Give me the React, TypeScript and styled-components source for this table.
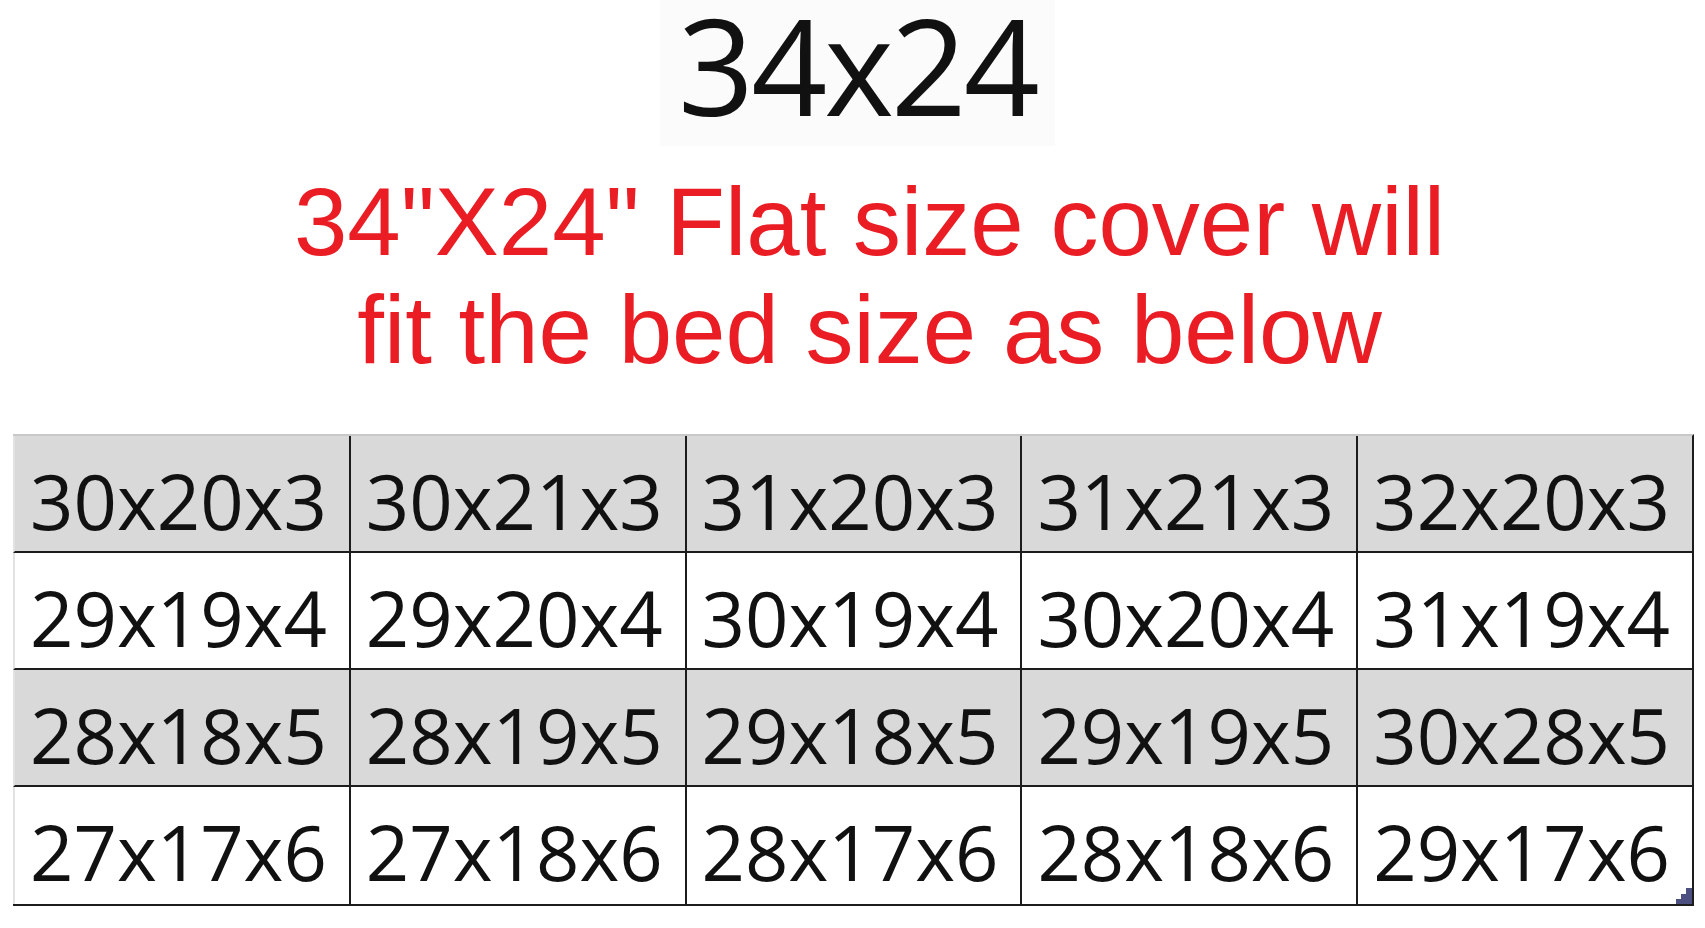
import React from 'react'
import styled, { createGlobalStyle } from 'styled-components'

const GlobalStyle = createGlobalStyle`
  html, body {
    margin: 0;
    padding: 0;
    background: #ffffff;
  }
`

const Page = styled.div`
  width: 1705px;
  height: 928px;
  overflow: hidden;
  display: flex;
  flex-direction: column;
  align-items: stretch;
  background: #ffffff;
`

const TitleWrap = styled.div`
  display: flex;
  justify-content: center;
  padding-left: 10px;
`

const Title = styled.h1`
  margin: 0;
  padding: 0 18px 16px;
  background: #fbfbfb;
  font-family: 'Open Sans', 'Noto Sans', sans-serif;
  font-weight: 400;
  font-size: 133px;
  line-height: 130px;
  letter-spacing: -3px;
  color: #111111;
`

const Notice = styled.p`
  margin: 22px 0 0;
  padding-left: 34px;
  text-align: center;
  font-family: 'Liberation Sans', Arial, sans-serif;
  font-size: 96px;
  line-height: 108px;
  color: #ea1c24;
`

const TableWrap = styled.div`
  margin: 50px 11px 0 13px;
  position: relative;
`

const Grid = styled.div`
  display: grid;
  grid-template-columns: repeat(5, 1fr);
  border-top: 2px solid #c8c8c8;
  border-right: 2px solid #1c1c1c;
  border-bottom: 2px solid #1c1c1c;
`

const Cell = styled.div<{ $shaded: boolean; $first: boolean; $lastRow: boolean }>`
  height: 117px;
  box-sizing: border-box;
  padding: 12px 0 0 15px;
  background: ${(p) => (p.$shaded ? '#d9d9d9' : '#ffffff')};
  border-left: 2px solid ${(p) => (p.$first ? '#e2e2e2' : '#1c1c1c')};
  border-bottom: ${(p) => (p.$lastRow ? 'none' : '2px solid #1c1c1c')};
  font-family: 'Open Sans', 'Noto Sans', sans-serif;
  font-size: 76px;
  line-height: 105px;
  color: #111111;
  white-space: nowrap;
`

const Handle = styled.svg`
  position: absolute;
  right: 2px;
  bottom: 2px;
  width: 16px;
  height: 16px;
`

const rows = [
  ['30x20x3', '30x21x3', '31x20x3', '31x21x3', '32x20x3'],
  ['29x19x4', '29x20x4', '30x19x4', '30x20x4', '31x19x4'],
  ['28x18x5', '28x19x5', '29x18x5', '29x19x5', '30x28x5'],
  ['27x17x6', '27x18x6', '28x17x6', '28x18x6', '29x17x6'],
]

const App = () => (
  <Page>
    <GlobalStyle />
    <TitleWrap>
      <Title>34x24</Title>
    </TitleWrap>
    <Notice>
      34"X24" Flat size cover will
      <br />
      fit the bed size as below
    </Notice>
    <TableWrap>
      <Grid>
        {rows.map((row, r) =>
          row.map((size, c) => (
            <Cell
              key={`${r}-${c}`}
              $shaded={r % 2 === 0}
              $first={c === 0}
              $lastRow={r === rows.length - 1}
            >
              {size}
            </Cell>
          ))
        )}
      </Grid>
      <Handle viewBox="0 0 16 16">
        <path d="M16 0 V16 H0 V11 H5 V6 H10 V0 Z" fill="#4b5080" />
      </Handle>
    </TableWrap>
  </Page>
)

export default App
